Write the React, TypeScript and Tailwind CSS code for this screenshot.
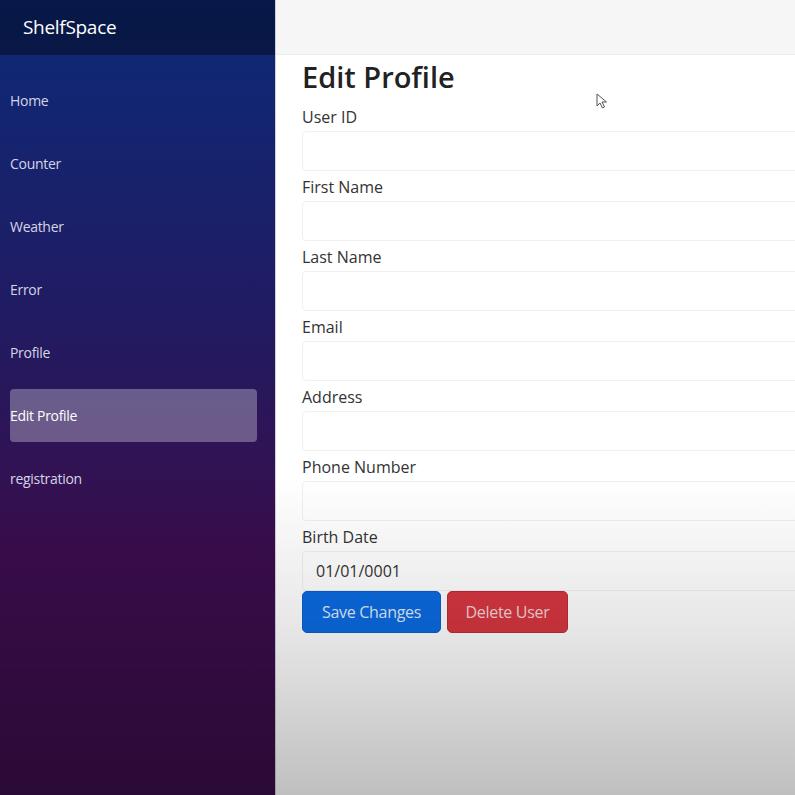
import React from "react";

const navItems = ["Home", "Counter", "Weather", "Error", "Profile", "Edit Profile", "registration"];
const fields = ["User ID", "First Name", "Last Name", "Email", "Address", "Phone Number"];

export default function App() {
  return (
    <div
      className="relative flex h-[795px] w-[795px] overflow-hidden"
      style={{ fontFamily: '"Open Sans", "Noto Sans", Arial, sans-serif' }}
    >
      <aside className="flex w-[275px] shrink-0 flex-col bg-[linear-gradient(180deg,#0c2a78_0%,#211b62_40%,#3a0d4b_70%,#380d47_100%)]">
        <div className="flex h-[55px] items-center bg-[rgba(0,0,0,0.4)] pl-[23px] text-[19px] tracking-[-0.3px] text-white">
          ShelfSpace
        </div>
        <nav className="flex flex-col gap-[10px] pt-[19px] pl-[10px] pr-[18px]">
          {navItems.map((item) => (
            <div
              key={item}
              className={
                "flex h-[53px] items-center rounded-[4px] text-[14px] tracking-[-0.3px] text-[#d6d4e6] " +
                (item === "Edit Profile" ? "bg-[rgba(255,255,255,0.3)] text-white" : "")
              }
            >
              {item}
            </div>
          ))}
        </nav>
      </aside>
      <div className="w-px shrink-0 bg-[#cfcfd6]" />
      <main className="flex min-w-0 flex-1 flex-col bg-white">
        <div className="h-[55px] shrink-0 border-b border-[#ececec] bg-[#f6f6f6]" />
        <div className="flex flex-col pl-[26px] pt-[3px]">
          <h1 className="mb-[9px] text-[29px] font-semibold leading-[38px] text-[#222]">Edit Profile</h1>
          {fields.map((f) => (
            <div key={f} className="flex flex-col">
              <label className="text-[16px] leading-[24px] text-[#333]">{f}</label>
              <div className="mt-[2px] mb-[4px] h-[40px] w-[560px] rounded-[4px] border border-[#f0f0f0] bg-transparent" />
            </div>
          ))}
          <label className="text-[16px] leading-[24px] text-[#333]">Birth Date</label>
          <div className="mt-[2px] flex h-[40px] w-[560px] items-center rounded-[4px] border border-[#f0f0f0] pl-[13px] text-[16px] text-[#333]">
            01/01/0001
          </div>
          <div className="flex gap-[6px]">
            <button className="h-[42px] w-[139px] rounded-[5px] border border-[#0a5fd0] bg-[#0b6ae0] text-[16px] tracking-[-0.3px] text-[#dfe9ff]">
              Save Changes
            </button>
            <button className="h-[42px] w-[121px] rounded-[5px] border border-[#c02a36] bg-[#d63640] text-[16px] tracking-[-0.3px] text-[#f4d4d6]">
              Delete User
            </button>
          </div>
        </div>
      </main>
      <svg className="absolute left-[596px] top-[93px]" width="12" height="16" viewBox="0 0 12 16">
        <path d="M1 1 L1 13 L4 10 L6.5 15 L8.5 14 L6 9 L10.5 9 Z" fill="#fff" stroke="#555" strokeWidth="1" />
      </svg>
      <div className="pointer-events-none absolute inset-0 bg-[linear-gradient(180deg,rgba(0,0,0,0)_0%,rgba(0,0,0,0)_60%,rgba(0,0,0,0.1)_80%,rgba(0,0,0,0.25)_100%)]" />
    </div>
  );
}
